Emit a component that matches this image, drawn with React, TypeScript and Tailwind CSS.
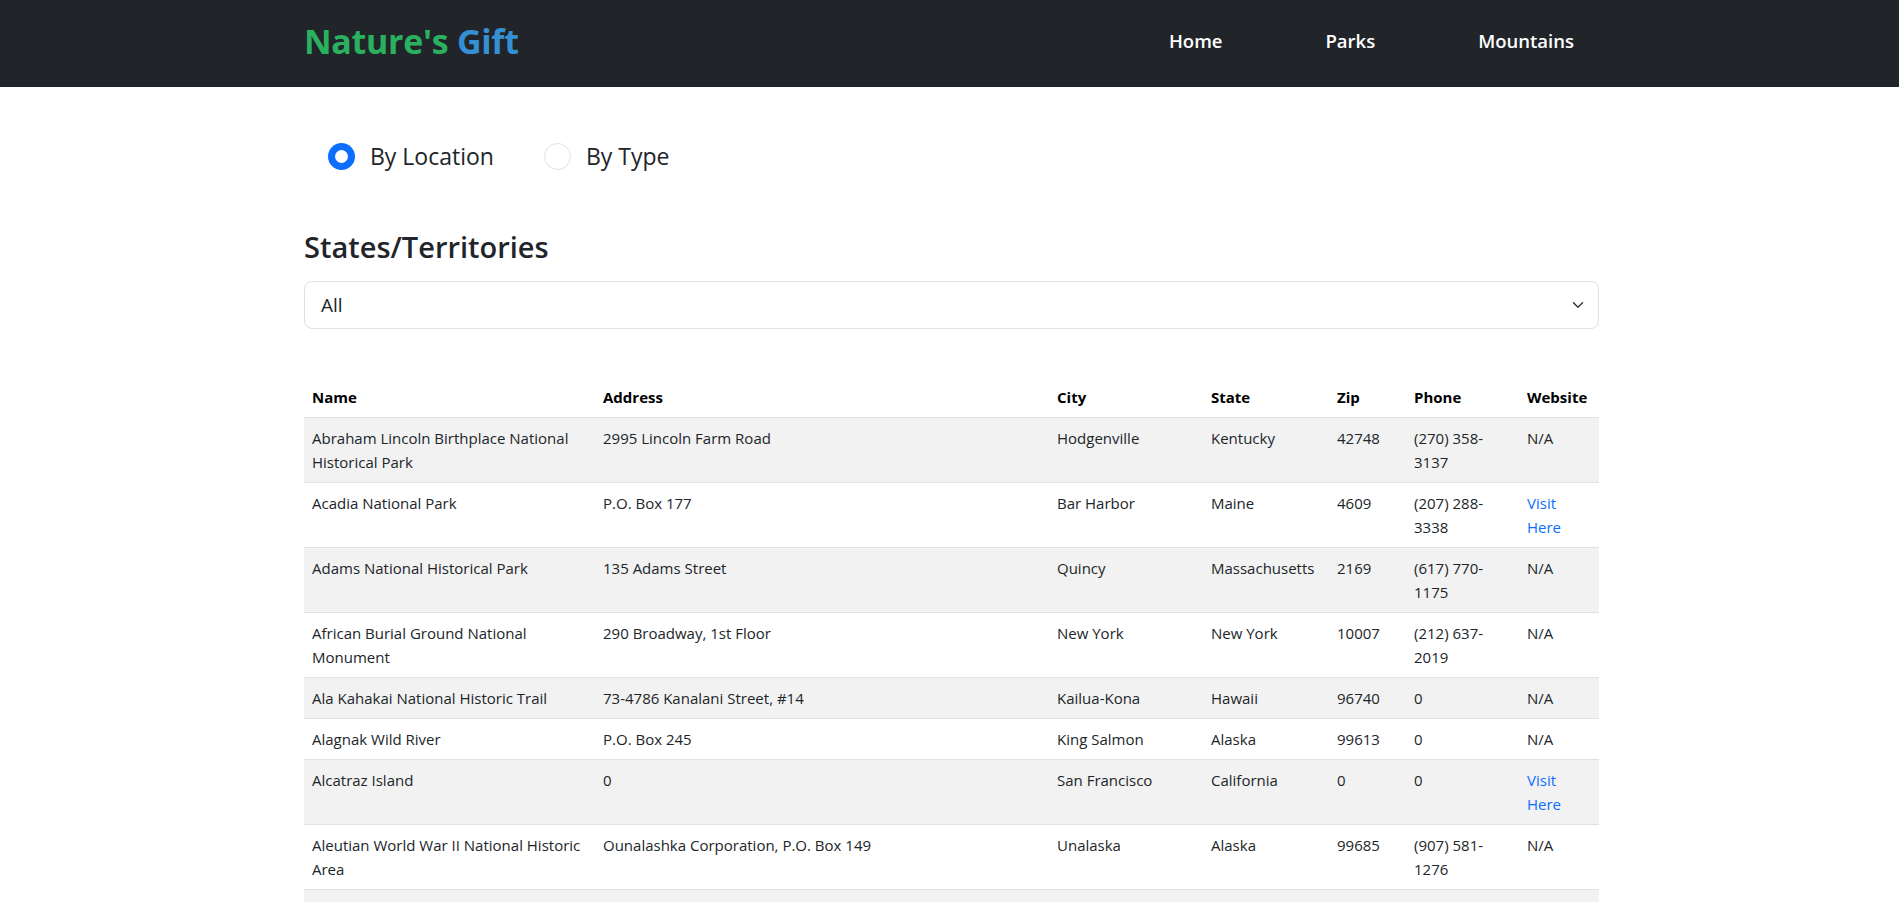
import React from "react";

interface Park {
  name: string;
  address: string;
  city: string;
  state: string;
  zip: string;
  phone: string;
  website: boolean;
}

const parks: Park[] = [
  { name: "Abraham Lincoln Birthplace National Historical Park", address: "2995 Lincoln Farm Road", city: "Hodgenville", state: "Kentucky", zip: "42748", phone: "(270) 358-3137", website: false },
  { name: "Acadia National Park", address: "P.O. Box 177", city: "Bar Harbor", state: "Maine", zip: "4609", phone: "(207) 288-3338", website: true },
  { name: "Adams National Historical Park", address: "135 Adams Street", city: "Quincy", state: "Massachusetts", zip: "2169", phone: "(617) 770-1175", website: false },
  { name: "African Burial Ground National Monument", address: "290 Broadway, 1st Floor", city: "New York", state: "New York", zip: "10007", phone: "(212) 637-2019", website: false },
  { name: "Ala Kahakai National Historic Trail", address: "73-4786 Kanalani Street, #14", city: "Kailua-Kona", state: "Hawaii", zip: "96740", phone: "0", website: false },
  { name: "Alagnak Wild River", address: "P.O. Box 245", city: "King Salmon", state: "Alaska", zip: "99613", phone: "0", website: false },
  { name: "Alcatraz Island", address: "0", city: "San Francisco", state: "California", zip: "0", phone: "0", website: true },
  { name: "Aleutian World War II National Historic Area", address: "Ounalashka Corporation, P.O. Box 149", city: "Unalaska", state: "Alaska", zip: "99685", phone: "(907) 581-1276", website: false },
  { name: "Alibates Flint Quarries National Monument", address: "P.O. Box 1460", city: "Fritch", state: "Texas", zip: "79036", phone: "(806) 857-3151", website: false },
];

function Radio({ checked, label }: { checked: boolean; label: string }) {
  return (
    <label className="flex items-center gap-[15px]">
      {checked ? (
        <span className="flex h-[27px] w-[27px] items-center justify-center rounded-full bg-[#0d6efd]">
          <span className="h-[13px] w-[13px] rounded-full bg-white" />
        </span>
      ) : (
        <span className="h-[27px] w-[27px] rounded-full border border-[#dee2e6] bg-white" />
      )}
      <span className="text-[23px] leading-[34px] text-[#212529]">{label}</span>
    </label>
  );
}

export default function App() {
  return (
    <div className="min-h-screen bg-white font-['Open_Sans',sans-serif] text-[#212529]">
      <nav className="h-[87px] bg-[#212529]">
        <div className="ml-[304px] mr-[300px] flex h-full items-center justify-between pb-[5px]">
          <a className="text-[34px] font-bold leading-none tracking-[-0.3px]">
            <span className="text-[#2ab160]">Nature's </span>
            <span className="text-[#3590d3]">Gift</span>
          </a>
          <ul className="mr-[25px] flex gap-[103px] text-[18.5px] font-semibold text-white">
            <li>Home</li>
            <li>Parks</li>
            <li>Mountains</li>
          </ul>
        </div>
      </nav>

      <main className="ml-[304px] mr-[300px]">
        <div className="mt-[49px] flex h-[40px] items-center pl-[24px]">
          <div className="w-[216px]">
            <Radio checked label="By Location" />
          </div>
          <Radio checked={false} label="By Type" />
        </div>

        <h2 className="mt-[52px] text-[29px] font-semibold leading-[38px]">States/Territories</h2>

        <div className="mt-[15px] flex h-[48px] items-center justify-between rounded-lg border border-[#dee2e6] pl-4 pr-3 text-[19px]">
          <span>All</span>
          <svg width="16" height="12" viewBox="0 0 16 16" fill="none" stroke="#343a40" strokeWidth="2" strokeLinecap="round" strokeLinejoin="round">
            <path d="m2 5 6 6 6-6" />
          </svg>
        </div>

        <table className="mt-[48px] w-full table-fixed border-collapse text-left text-[15px] leading-6">
          <colgroup>
            <col className="w-[291px]" />
            <col className="w-[454px]" />
            <col className="w-[154px]" />
            <col className="w-[126px]" />
            <col className="w-[77px]" />
            <col className="w-[113px]" />
            <col className="w-[80px]" />
          </colgroup>
          <thead>
            <tr className="border-b border-[#dee2e6]">
              {["Name", "Address", "City", "State", "Zip", "Phone", "Website"].map((h) => (
                <th key={h} className="px-2 py-2 align-bottom font-bold text-black">
                  {h}
                </th>
              ))}
            </tr>
          </thead>
          <tbody>
            {parks.map((p, i) => (
              <tr key={p.name} className={`border-b border-[#dee2e6] align-top ${i % 2 === 0 ? "bg-[#f2f2f2]" : "bg-white"}`}>
                <td className="px-2 py-2">{p.name}</td>
                <td className="px-2 py-2">{p.address}</td>
                <td className="px-2 py-2">{p.city}</td>
                <td className="px-2 py-2">{p.state}</td>
                <td className="px-2 py-2">{p.zip}</td>
                <td className="px-2 py-2">{p.phone}</td>
                <td className="px-2 py-2">
                  {p.website ? <a className="text-[#0d6efd]">Visit Here</a> : "N/A"}
                </td>
              </tr>
            ))}
          </tbody>
        </table>
      </main>
    </div>
  );
}
